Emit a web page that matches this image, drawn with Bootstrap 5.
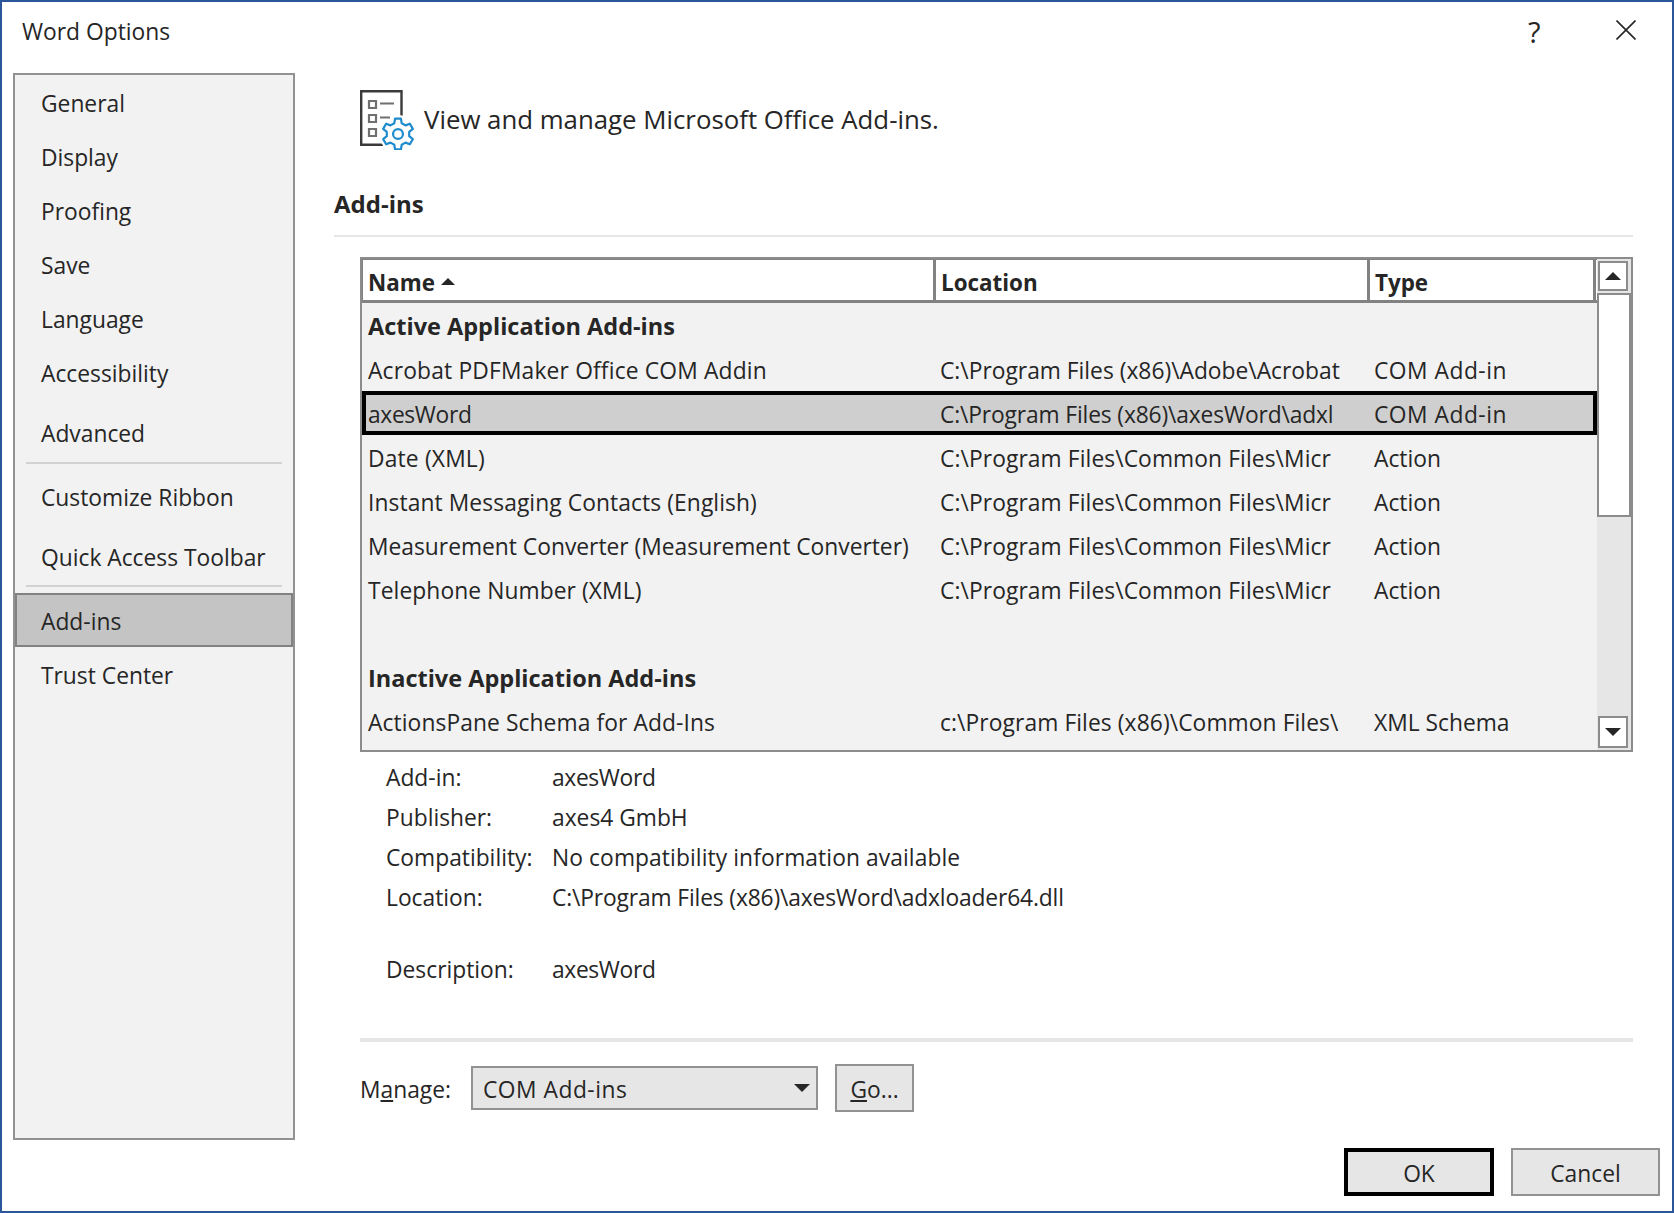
<!DOCTYPE html>
<html lang="en"><head><meta charset="utf-8"><title>Word Options</title>
<link href="https://cdn.jsdelivr.net/npm/bootstrap@5.3.0/dist/css/bootstrap.min.css" rel="stylesheet">
<style>
html,body{height:100%;margin:0;background:#fff}
body{font-family:"Open Sans","Noto Sans",sans-serif;font-size:22.8px;color:#262626;line-height:1.2}
.dlg{width:1674px;height:1213px;border:2px solid #2b579a;background:#fff}
.ttl{height:71px;padding-left:20px;padding-top:14px}
.ttl-name{font-size:22.8px;line-height:32px}
.ttl-help{position:absolute;left:1526px;top:15px;font-size:29px;line-height:30px}
.ttl-x{position:absolute;left:1614px;top:18px}
.bdy{height:1067px;padding-left:11px}
.side{width:282px;height:1067px;border:2px solid #929292;background:#f2f2f2;flex:none}
.s-item{height:54px;display:flex;align-items:center;padding:4px 0 0 26px;margin:0}
.s-item.a1{height:60px;margin-top:3px}
.s-item.a2{height:60px;margin-top:2px}
.s-item.a3{height:59px}
.s-sep{height:2px;background:#d2d2d2;margin:0 11px}
.s-active{height:54px;background:#c4c4c4;border:2px solid #828282;padding:4px 0 0 24px;display:flex;align-items:center;margin:6px 0 0}
.mn{padding-left:39px;width:1338px}
.hd-row{height:85px;padding-left:26px;padding-top:17px}
.hd-txt{font-size:25.8px;margin-left:10px;margin-top:14px;line-height:30px}
.sec{font-weight:700;font-size:24px;line-height:30px;height:30px;margin-top:31px}
.rule{height:2px;background:#e6e6e6;margin-top:16px;width:1299px}
.grid-wrap{margin:20px 0 0 26px;width:1273px;height:495px;border:2px solid #8c8c8c;background:#f2f2f2;display:flex}
.g-main{width:1235px;flex:none}
.g-head{display:flex;height:44px;background:#fff;border:solid #828282;border-width:1px 0 3px 1px;font-weight:700;font-size:22.4px}
.g-head>div{padding-left:5px;line-height:45px;border-right:3px solid #828282}
.g-head>.c1{width:573px}
.c1{width:572px}.c2{width:434px}.c3{width:226px}
.g-row{display:flex;height:44px;align-items:center;white-space:nowrap;overflow:hidden;padding:4px 0 0 1px}
.g-row>div{padding-left:5px}
.g-row.cap{font-weight:700;font-size:23.5px;padding-top:2px}
.g-row.sel{background:#cfcfcf;outline:4px solid #000;outline-offset:-4px;position:relative}
.ls{letter-spacing:.5px}
.ax{letter-spacing:-.35px}
.al{letter-spacing:-.14px}
.lp{letter-spacing:.09px}
.lq{letter-spacing:.17px}
.g-sb{flex:1;background:#e6e6e6;display:flex;flex-direction:column;padding:2px 0 0}
.sb-btn{height:30px;margin:0 3px 0 1px;background:#fff;border:2px solid #8c8c8c;display:flex;align-items:center;justify-content:center;flex:none}
.sb-btn.sb-dn{height:32px;margin-bottom:2px}
.sb-thumb{height:224px;margin:2px 0 0;background:#fff;border:2px solid #8c8c8c;flex:none}
.sb-gap{flex:1}
.up{width:0;height:0;border-left:8px solid transparent;border-right:8px solid transparent;border-bottom:8px solid #262626}
.dn{width:0;height:0;border-left:8px solid transparent;border-right:8px solid transparent;border-top:8px solid #262626}
.up.tiny{display:inline-block;border-width:0 7px 7px;vertical-align:6px;margin-left:6px}
.info{margin:5px 0 0 52px;padding-top:1px}
.info-row{display:flex;height:40px;align-items:center}
.info-row.desc{margin-top:32px}
.info-k{width:166px}
.thick{height:4px;background:#e6e6e6;margin:48px 0 0 26px;width:1273px}
.mgr{margin:22px 0 0 26px;height:48px}
.mgr u{text-underline-offset:2px}
.mgr-l{padding-top:3px}
.combo{width:347px;height:44px;margin-left:20px;background:#e6e6e6;border:2px solid #929292;display:flex;align-items:center;justify-content:space-between;padding:3px 6px 0 10px}
.combo .dn{margin-top:-3px}
.gobtn{width:79px;height:48px;margin-left:17px;background:#e6e6e6;border:2px solid #929292;display:flex;align-items:center;justify-content:center;padding-top:3px}
.foot{position:absolute;left:1342px;top:1146px;gap:17px}
.dbtn{width:150px;height:48px;background:#e6e6e6;border:2px solid #929292;display:flex;align-items:center;justify-content:center;padding-top:4px}
.dbtn.def{border:4px solid #000}
.foot .dbtn+.dbtn{width:149px}
</style></head><body>
<div class="dlg position-relative">
 <div class="ttl"><div class="ttl-name">Word Options</div></div>
 <div class="ttl-help">?</div>
 <svg class="ttl-x" width="20" height="20" viewBox="0 0 20 20"><path d="M.5.500l19 19M19.500.500l-19 19" stroke="#262626" stroke-width="1.600" fill="none"/></svg>
 <div class="bdy d-flex">
  <div class="side">
   <div class="s-item">General</div><div class="s-item">Display</div><div class="s-item">Proofing</div><div class="s-item">Save</div><div class="s-item">Language</div><div class="s-item">Accessibility</div>
   <div class="s-item a1">Advanced</div><div class="s-sep"></div>
   <div class="s-item a2">Customize Ribbon</div><div class="s-item a3">Quick Access Toolbar</div><div class="s-sep"></div>
   <div class="s-active">Add-ins</div><div class="s-item">Trust Center</div>
  </div>
  <div class="mn">
   <div class="hd-row d-flex">
    <svg width="54" height="60" viewBox="0 0 54 60" fill="none">
     <path d="M28 54.700H1.200V1.200H41.500V30" stroke="#3a3a3a" stroke-width="2.400"/>
     <path d="M9 11h7v7H9zM9 25h7v7H9zM9 39h7v7H9z" stroke="#707070" stroke-width="2.200"/>
     <path d="M20 13.500h14M20 27.500h10" stroke="#707070" stroke-width="2"/>
     <g transform="translate(38 44) scale(.95)" stroke-linejoin="round">
      <path d="M-3.900-11.300L-3.100-16.200L3.100-16.200L3.900-11.300L7.900-9.100L12.500-10.800L15.600-5.400L11.800-2.300L11.800 2.300L15.600 5.400L12.500 10.800L7.900 9.100L3.900 11.300L3.100 16.200L-3.100 16.200L-3.900 11.300L-7.900 9.100L-12.500 10.800L-15.600 5.400L-11.800 2.300L-11.800-2.300L-15.600-5.400L-12.500-10.800L-7.900-9.100Z" fill="#fff" stroke="#fff" stroke-width="7"/>
      <path d="M-3.900-11.300L-3.100-16.200L3.100-16.200L3.900-11.300L7.900-9.100L12.500-10.800L15.600-5.400L11.800-2.300L11.800 2.300L15.600 5.400L12.500 10.800L7.900 9.100L3.900 11.300L3.100 16.200L-3.100 16.200L-3.900 11.300L-7.900 9.100L-12.500 10.800L-15.600 5.400L-11.800 2.300L-11.800-2.300L-15.600-5.400L-12.500-10.800L-7.900-9.100Z" stroke="#1e8bcd" stroke-width="2.300"/>
      <circle r="5.200" stroke="#1e8bcd" stroke-width="2.300"/>
     </g>
    </svg>
    <div class="hd-txt">View and manage Microsoft Office Add-ins.</div>
   </div>
   <div class="sec">Add-ins</div>
   <div class="rule"></div>
   <div class="grid-wrap">
    <div class="g-main">
     <div class="g-head"><div class="c1">Name<span class="up tiny"></span></div><div class="c2">Location</div><div class="c3">Type</div></div>
     <div class="g-row cap"><div>Active Application Add-ins</div></div>
     <div class="g-row"><div class="c1 lq">Acrobat PDFMaker Office COM Addin</div><div class="c2">C:\Program Files (x86)\Adobe\Acrobat</div><div class="c3 ls">COM Add-in</div></div>
     <div class="g-row sel"><div class="c1 ax">axesWord</div><div class="c2 al">C:\Program Files (x86)\axesWord\adxl</div><div class="c3 ls">COM Add-in</div></div>
     <div class="g-row"><div class="c1 lq">Date (XML)</div><div class="c2 lp">C:\Program Files\Common Files\Micr</div><div class="c3">Action</div></div>
     <div class="g-row"><div class="c1 lp">Instant Messaging Contacts (English)</div><div class="c2 lp">C:\Program Files\Common Files\Micr</div><div class="c3">Action</div></div>
     <div class="g-row"><div class="c1">Measurement Converter (Measurement Converter)</div><div class="c2 lp">C:\Program Files\Common Files\Micr</div><div class="c3">Action</div></div>
     <div class="g-row"><div class="c1 lp">Telephone Number (XML)</div><div class="c2 lp">C:\Program Files\Common Files\Micr</div><div class="c3">Action</div></div>
     <div class="g-row"></div>
     <div class="g-row cap"><div>Inactive Application Add-ins</div></div>
     <div class="g-row"><div class="c1 lp">ActionsPane Schema for Add-Ins</div><div class="c2 lp">c:\Program Files (x86)\Common Files\</div><div class="c3">XML Schema</div></div>
    </div>
    <div class="g-sb">
     <div class="sb-btn"><span class="up"></span></div>
     <div class="sb-thumb"></div>
     <div class="sb-gap"></div>
     <div class="sb-btn sb-dn"><span class="dn"></span></div>
    </div>
   </div>
   <div class="info">
    <div class="info-row"><div class="info-k">Add-in:</div><div class="ax">axesWord</div></div>
    <div class="info-row"><div class="info-k">Publisher:</div><div>axes4 GmbH</div></div>
    <div class="info-row"><div class="info-k">Compatibility:</div><div class="lp">No compatibility information available</div></div>
    <div class="info-row"><div class="info-k">Location:</div><div class="al">C:\Program Files (x86)\axesWord\adxloader64.dll</div></div>
    <div class="info-row desc"><div class="info-k">Description:</div><div class="ax">axesWord</div></div>
   </div>
   <div class="thick"></div>
   <div class="mgr d-flex align-items-center">
    <div class="mgr-l">M<u>a</u>nage:</div>
    <div class="combo"><span class="ls">COM Add-ins</span><span class="dn"></span></div>
    <div class="gobtn"><span><u>G</u>o...</span></div>
   </div>
  </div>
 </div>
 <div class="foot d-flex"><div class="dbtn def">OK</div><div class="dbtn">Cancel</div></div>
</div>
<script src="https://cdn.jsdelivr.net/npm/bootstrap@5.3.0/dist/js/bootstrap.bundle.min.js"></script>
</body></html>
